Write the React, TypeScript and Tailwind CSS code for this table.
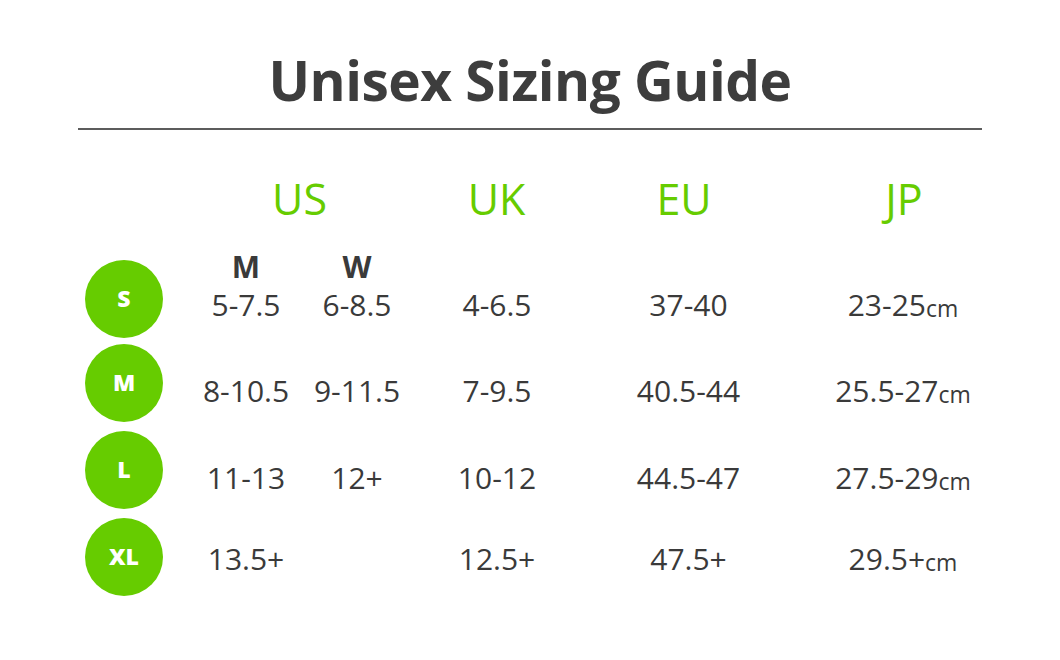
const SANS = "font-['Open_Sans','Liberation_Sans',sans-serif]";

interface SizeRow {
  label: string;
  usM: string;
  usW: string;
  uk: string;
  eu: string;
  jp: string;
  pad: string;
}

const ROWS: SizeRow[] = [
  { label: 'S', usM: '5-7.5', usW: '6-8.5', uk: '4-6.5', eu: '37-40', jp: '23-25', pad: 'pt-[12px]' },
  { label: 'M', usM: '8-10.5', usW: '9-11.5', uk: '7-9.5', eu: '40.5-44', jp: '25.5-27', pad: 'pt-[16px]' },
  { label: 'L', usM: '11-13', usW: '12+', uk: '10-12', eu: '44.5-47', jp: '27.5-29', pad: 'pt-[16px]' },
  { label: 'XL', usM: '13.5+', usW: '', uk: '12.5+', eu: '47.5+', jp: '29.5+', pad: 'pt-[4px]' },
];

function Cell({ children, className = '' }: { children?: React.ReactNode; className?: string }) {
  return (
    <div className={`flex items-center justify-center whitespace-nowrap text-[30px] font-medium leading-none text-[#3a3a3a] ${className}`}>
      {children}
    </div>
  );
}

function UsCell({ head, value, first, pad }: { head: string; value: string; first: boolean; pad: string }) {
  if (!first) return <Cell className={pad}>{value}</Cell>;
  return (
    <div className="flex flex-col items-center justify-center whitespace-nowrap pb-[25px] leading-none text-[#3a3a3a]">
      <span className="mb-[8px] text-[30px] font-bold">{head}</span>
      <span className="text-[30px] font-medium">{value}</span>
    </div>
  );
}

export default function App() {
  return (
    <div className={`h-[660px] w-[1060px] overflow-hidden bg-white ${SANS}`}>
      {/* Title */}
      <div className="flex justify-center pt-[52px]">
        <h1 className="text-[55px] font-bold leading-none tracking-[-0.5px] text-[#3d3d3d]">Unisex Sizing Guide</h1>
      </div>
      <div className="ml-[78px] mt-[21px] h-[2px] w-[904px] bg-[#5c5c5c]" />

      {/* Column headers */}
      <div className="mt-[47px] grid grid-cols-[259px_135px_240px_200px] pl-[170px] text-[43px] leading-none text-[#66cc00]">
        <div className="text-center">US</div>
        <div className="text-center">UK</div>
        <div className="text-center">EU</div>
        <div className="text-center">JP</div>
      </div>

      {/* Size rows */}
      <div className="mt-[32px] ml-[78px] flex flex-col">
        {ROWS.map((r, i) => (
          <div key={r.label} className="grid h-[87px] grid-cols-[92px_152px_70px_210px_173px_256px]">
            <div className="flex items-center justify-center">
              <div className="flex h-[78px] w-[78px] items-center justify-center rounded-full bg-[#66cc00] text-[23px] font-extrabold leading-none text-white">
                {r.label}
              </div>
            </div>
            <UsCell head="M" value={r.usM} first={i === 0} pad={r.pad} />
            <UsCell head="W" value={r.usW} first={i === 0} pad={r.pad} />
            <Cell className={r.pad}>{r.uk}</Cell>
            <Cell className={r.pad}>{r.eu}</Cell>
            <Cell className={r.pad}>
              {r.jp}
              <span className="mt-[7px] text-[23px]">cm</span>
            </Cell>
          </div>
        ))}
      </div>
    </div>
  );
}
